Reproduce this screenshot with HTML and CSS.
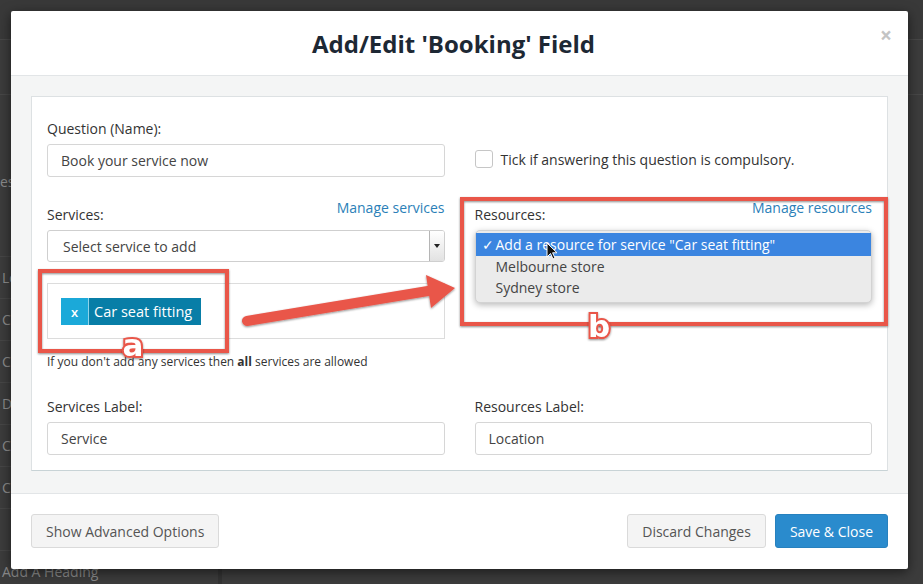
FILE: index.html
```html
<!DOCTYPE html>
<html lang="en">
<head>
    <meta charset="UTF-8">
    <title>Add/Edit 'Booking' Field</title>
    <link rel="stylesheet" href="styles.css">
</head>
<body>

<!-- page behind the dialog -->
<div class="page">
    <div class="page-top"></div>
    <div class="page-bar"></div>
    <div class="page-side">
        <div class="side-head"><span class="side-cut">es</span></div>
        <div class="side-item">Location</div>
        <div class="side-item">Checkbox</div>
        <div class="side-item">Choice</div>
        <div class="side-item">Date</div>
        <div class="side-item">CAPTCHA</div>
        <div class="side-item">Contact</div>
        <div class="side-item"></div>
        <div class="side-item">Add A Heading</div>
    </div>
</div>

<div class="modal">
    <div class="modal-head">
        <h2>Add/Edit 'Booking' Field</h2>
        <span class="close">&times;</span>
    </div>

    <div class="modal-body">
        <div class="panel">
            <div class="row">
                <div class="col">
                    <label>Question (Name):</label>
                    <div class="field">Book your service now</div>
                </div>
                <div class="col">
                    <div class="check-row">
                        <span class="checkbox"></span>
                        <span>Tick if answering this question is compulsory.</span>
                    </div>
                </div>
            </div>

            <div class="row row-mid">
                <div class="col">
                    <div class="head">
                        <label>Services:</label>
                        <a href="#">Manage services</a>
                    </div>
                    <div class="select">
                        <span>Select service to add</span>
                        <span class="caret"><i></i></span>
                    </div>
                    <div class="tags">
                        <span class="tag"><span class="tag-x">x</span><span class="tag-name">Car seat fitting</span></span>
                    </div>
                    <div class="hint">If you don't add any services then <b>all</b> services are allowed</div>
                </div>
                <div class="col">
                    <div class="head">
                        <label>Resources:</label>
                        <a href="#">Manage resources</a>
                    </div>
                    <div class="list">
                        <div class="opt on"><span class="tick">✓</span>Add a resource for service "Car seat fitting"</div>
                        <div class="opt">Melbourne store</div>
                        <div class="opt">Sydney store</div>
                    </div>
                </div>
            </div>

            <div class="row row-last">
                <div class="col">
                    <label>Services Label:</label>
                    <div class="field">Service</div>
                </div>
                <div class="col">
                    <label>Resources Label:</label>
                    <div class="field">Location</div>
                </div>
            </div>
        </div>
    </div>

    <div class="modal-foot">
        <button class="btn">Show Advanced Options</button>
        <button class="btn push">Discard Changes</button>
        <button class="btn btn-primary">Save &amp; Close</button>
    </div>
</div>

<!-- screenshot annotations -->
<svg class="notes" width="923" height="584" viewBox="0 0 923 584">
    <defs>
        <filter id="sh" x="-20%" y="-20%" width="140%" height="140%">
            <feDropShadow dx="0" dy="1" stdDeviation="1.3" flood-color="#000" flood-opacity=".45"/>
        </filter>
    </defs>
    <g filter="url(#sh)" fill="none" stroke="#e9564a" stroke-width="4">
        <rect x="40" y="271" width="187" height="80"/>
        <rect x="462" y="199" width="424" height="125"/>
    </g>
    <g filter="url(#sh)" fill="#e9564a">
        <line x1="247" y1="321" x2="434" y2="290" stroke="#e9564a" stroke-width="10" stroke-linecap="round"/>
        <polygon points="426,275 455,288 431,308"/>
    </g>
    <g filter="url(#sh)">
        <text class="mark" x="133" y="356">a</text>
        <text class="mark" x="599" y="337">b</text>
    </g>
    <path transform="translate(547,243)" d="M0 0 V14 L3.5 10.5 L6 16 L8 15 L5.6 9.8 H10 Z" fill="#111" stroke="#fff" stroke-width="1"/>
</svg>

</body>
</html>
```

FILE: styles.css
```css
* {
    box-sizing: border-box;
}

html, body {
    margin: 0;
    height: 100%;
}

body {
    background-color: #3c3c3c;
    font-family: "Open Sans", "Liberation Sans", sans-serif;
    font-size: 14px;
    color: #333;
    overflow: hidden;
    position: relative;
}

/* page behind */
.page-top {
    height: 40px;
    background-color: #393939;
    border-bottom: 1px solid #474747;
}

.page-bar {
    height: 55px;
    border-bottom: 1px solid #474747;
}

.page-side {
    width: 222px;
    border-right: 4px solid #333;
    color: #8b8b8b;
}

.side-head {
    height: 161px;
    padding-top: 77px;
    line-height: 20px;
}

.side-item {
    height: 42px;
    line-height: 41px;
    border-top: 1px solid #464646;
    padding-left: 2px;
    white-space: nowrap;
}

/* dialog */
.modal {
    position: absolute;
    left: 11px;
    top: 11px;
    width: 897px;
    height: 558px;
    background-color: #fff;
    border-radius: 2px;
    box-shadow: 0 3px 12px rgba(0, 0, 0, 0.55);
    display: flex;
    flex-direction: column;
}

.modal-head {
    height: 65px;
    border-bottom: 1px solid #e2e5e7;
    display: flex;
    align-items: center;
    justify-content: center;
    padding-right: 12px;
    position: relative;
}

.modal-head h2 {
    margin: 0;
    font-size: 24px;
    font-weight: 700;
    color: #1d2834;
}

.close {
    position: absolute;
    right: 16px;
    top: 10px;
    font-size: 21px;
    font-weight: 700;
    color: #c4c4c4;
}

.modal-body {
    flex: 1;
    background-color: #f4f5f5;
    padding: 20px 20px 21px;
}

.panel {
    background-color: #fff;
    border: 1px solid #dde1e3;
    border-bottom-color: #c8d3d6;
    padding: 22px 15px 15px;
}

.row {
    display: grid;
    grid-template-columns: 1fr 1fr;
    column-gap: 30px;
}

.row-mid {
    margin-top: 20px;
}

.row-last {
    margin-top: 27px;
}

label {
    display: block;
    line-height: 20px;
    margin-bottom: 5px;
}

.field {
    height: 33px;
    border: 1px solid #d6d6d6;
    border-radius: 3px;
    padding: 0 13px;
    display: flex;
    align-items: center;
    color: #444;
}

.check-row {
    margin-top: 25px;
    height: 30px;
    display: flex;
    align-items: center;
    gap: 8px;
}

.checkbox {
    width: 18px;
    height: 18px;
    border: 1px solid #c6c6c6;
    border-radius: 3px;
}

.head {
    display: flex;
    justify-content: space-between;
    align-items: flex-start;
    height: 27px;
    margin-bottom: 6px;
}

.head label {
    margin: 8px 0 0;
}

.head a {
    color: #2b7fb8;
    text-decoration: none;
    line-height: 20px;
    margin-top: 1px;
}

.select {
    height: 32px;
    border: 1px solid #cfcfcf;
    border-radius: 3px;
    display: flex;
    color: #444;
}

.select span:first-child {
    flex: 1;
    padding: 1px 0 0 15px;
    line-height: 30px;
}

.caret {
    width: 15px;
    border-left: 1px solid #b5b5b5;
    border-radius: 0 2px 2px 0;
    background: linear-gradient(#fff, #e2e2e2);
    display: flex;
    align-items: center;
    justify-content: center;
}

.caret i {
    border-left: 3px solid transparent;
    border-right: 3px solid transparent;
    border-top: 4px solid #222;
}

.tags {
    margin-top: 21px;
    height: 56px;
    border: 1px solid #dcdcdc;
    padding: 14px 13px;
}

.tag {
    display: inline-flex;
    height: 27px;
}

.tag-x {
    width: 28px;
    background-color: #1ba9d9;
    border-right: 1px solid #8fd3ea;
    color: #fff;
    font-size: 13px;
    font-weight: 600;
    display: flex;
    align-items: center;
    justify-content: center;
}

.tag-name {
    background-color: #087ea7;
    color: #fff;
    font-size: 14.5px;
    line-height: 27px;
    padding: 0 9px 0 5px;
}

.hint {
    margin-top: 15px;
    font-size: 12px;
    line-height: 16px;
}

/* open resource dropdown */
.list {
    background-color: #ebebeb;
    border: 1px solid #d3d3d3;
    border-radius: 5px;
    box-shadow: 0 2px 6px rgba(0, 0, 0, 0.28);
    padding: 2px 0 4px;
}

.opt {
    line-height: 21px;
    padding-left: 20px;
    color: #444;
}

.opt.on {
    background-color: #3b85e0;
    color: #fff;
    line-height: 23px;
    padding-left: 6px;
}

.tick {
    display: inline-block;
    width: 14px;
}

/* footer */
.modal-foot {
    height: 76px;
    border-top: 1px solid #e2e5e7;
    padding: 20px 20px 0;
    display: flex;
    align-items: flex-start;
    gap: 9px;
}

.btn {
    height: 34px;
    padding: 0 14px;
    border: 1px solid #dadada;
    border-radius: 3px;
    background-color: #f4f4f4;
    color: #555;
    font: inherit;
}

.push {
    margin-left: auto;
}

.btn-primary {
    background-color: #2a8bcd;
    border-color: #2781be;
    color: #fff;
}

/* annotations */
.notes {
    position: absolute;
    left: 0;
    top: 0;
    pointer-events: none;
}

.mark {
    font-family: "DejaVu Sans", sans-serif;
    font-weight: 700;
    font-size: 31px;
    fill: #fff;
    stroke: #e9564a;
    stroke-width: 4;
    paint-order: stroke;
    text-anchor: middle;
}
```
